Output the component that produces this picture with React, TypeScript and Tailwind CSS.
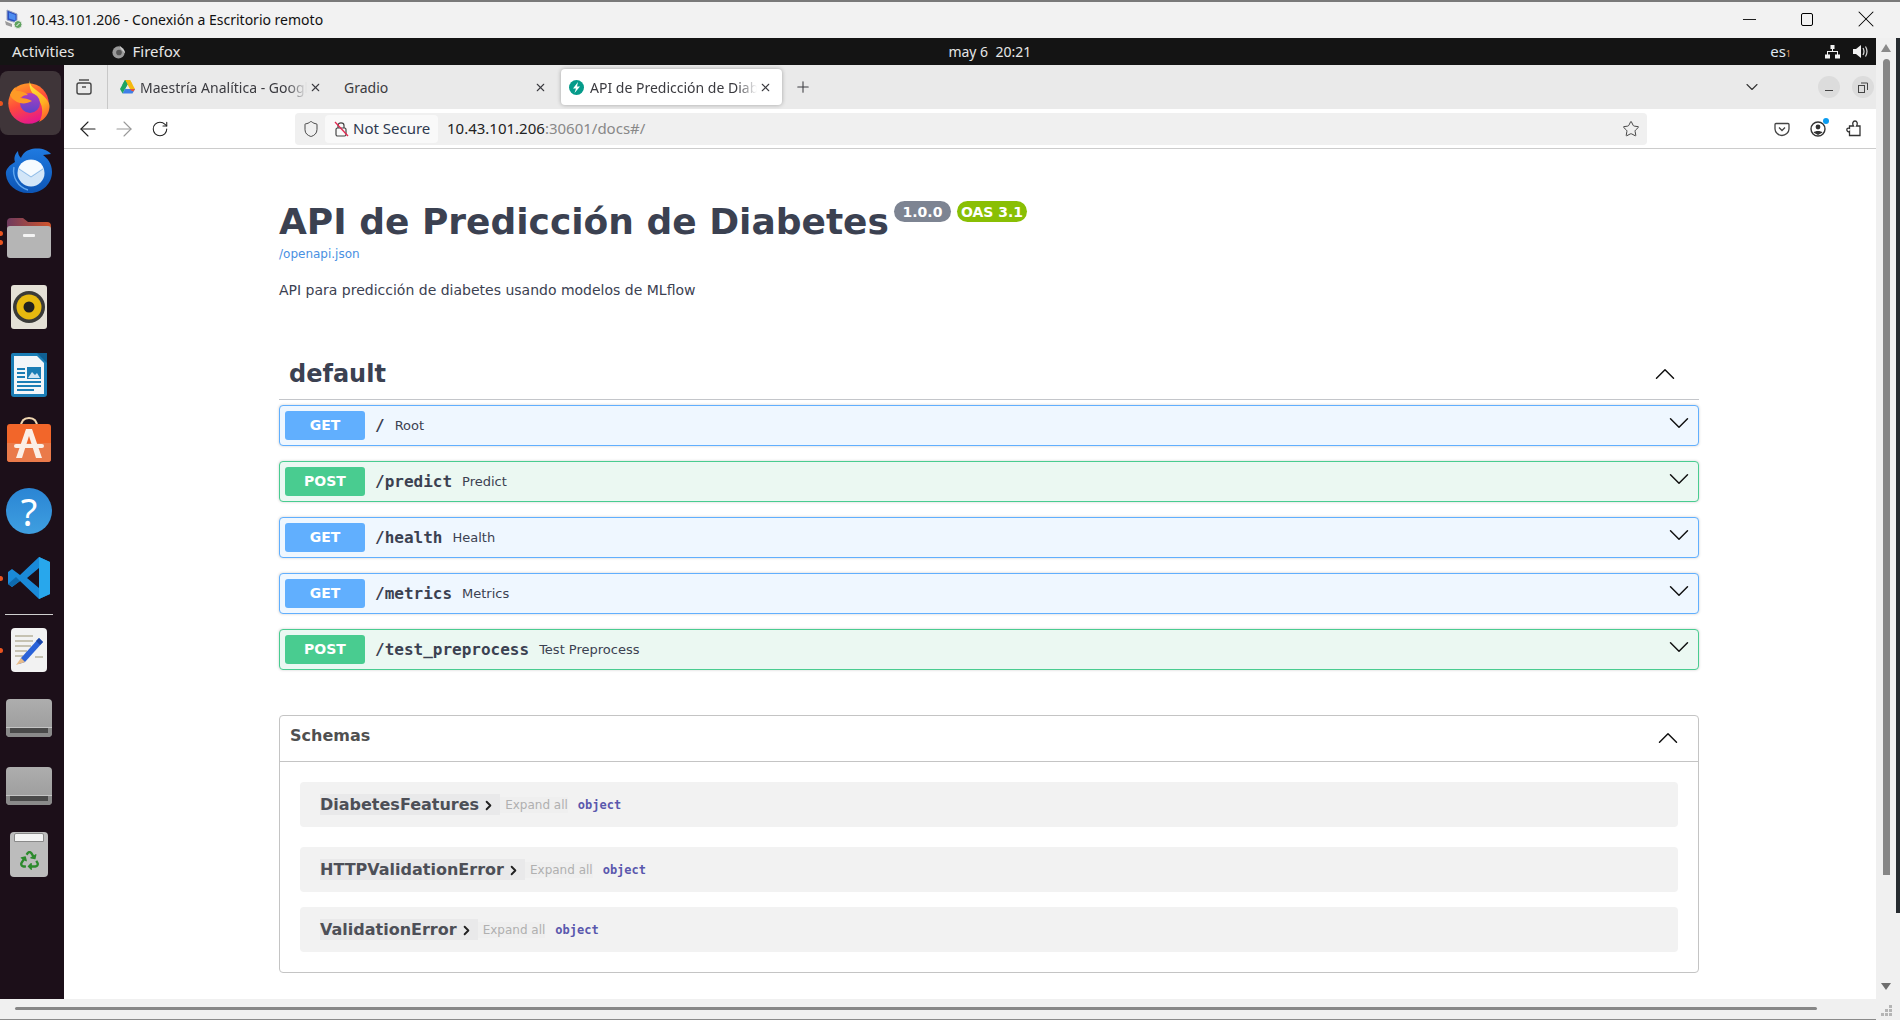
import React from 'react';
import { ArrowLeft, ArrowRight, ChevronDown, ChevronRight, ChevronUp, Minus, Plus, RotateCw, Shield, Star, X } from 'lucide-react';
import { FaRecycle } from 'react-icons/fa';

const uiFont = "font-['Noto_Sans',sans-serif]";
const swaggerFont = "font-['DejaVu_Sans',sans-serif]";
const monoFont = "font-['DejaVu_Sans_Mono',monospace]";

const RdpIcon = () => (
  <svg width="20" height="20" viewBox="0 0 20 20">
    <path d="M3 1 L13 5 V14 L3 11 Z" fill="#2b4fc0" stroke="#9aa5c0" strokeWidth="1" />
    <path d="M5 3.5 L11.5 6 V11.5 L5 9.5 Z" fill="#4d8df0" />
    <path d="M1 12 L8 15 V18 L2 16 Z" fill="#9a9a9a" />
    <circle cx="14" cy="15.5" r="4" fill="#5fa35f" stroke="#e8e8e8" />
    <path d="M12.5 17 L15.5 14" stroke="#fff" />
  </svg>
);

const FirefoxIcon = () => (
  <svg className="mb-[2px]" width="42" height="44" viewBox="0 0 42 44">
    <defs>
      <linearGradient id="ffBody" x1="0.2" y1="0" x2="0.6" y2="1">
        <stop offset="0" stopColor="#ffa024" />
        <stop offset="0.5" stopColor="#ff4a3c" />
        <stop offset="1" stopColor="#e31590" />
      </linearGradient>
      <linearGradient id="ffFlame" x1="0.3" y1="0" x2="0.7" y2="1">
        <stop offset="0" stopColor="#ffe23c" />
        <stop offset="0.6" stopColor="#ffb020" />
        <stop offset="1" stopColor="#ff5a30" />
      </linearGradient>
      <linearGradient id="ffCore" x1="0.5" y1="0" x2="0.5" y2="1">
        <stop offset="0" stopColor="#b13cc0" />
        <stop offset="1" stopColor="#5a45c8" />
      </linearGradient>
    </defs>
    <circle cx="20.5" cy="23.5" r="20.2" fill="url(#ffBody)" />
    <path d="M22 0 C21 6 26 8 32 13 C38 18 42 22 41.5 27 C41 34 37 39 31 42 C36 34 35 24 29 18 C24 14 20 7 22 0 Z" fill="url(#ffFlame)" />
    <circle cx="22" cy="23" r="10" fill="url(#ffCore)" />
    <path d="M2 15 C3 11 6 8 8 7 C7 10 8 11 10 11 C13 11 17 12 20 15 C16 15 14 16 12 18 C16 18 21 19 24 21 C19 24 13 24 9 22 C6 20 3 18 2 15 Z" fill="#ff9a26" />
  </svg>
);

const ThunderbirdIcon = () => (
  <svg className="mb-[2px]" width="48" height="48" viewBox="0 0 48 48">
    <defs>
      <linearGradient id="tbBody" x1="0.5" y1="0" x2="0.5" y2="1">
        <stop offset="0" stopColor="#1f7ae0" />
        <stop offset="1" stopColor="#0d55b5" />
      </linearGradient>
    </defs>
    <path d="M13 4 C9 8 9 12 10 15 C5 18 0 22 1 28 C2 38 12 47 25 46 C38 46 47 36 47 25 C47 16 42 11 38 8 L46 7 C42 2 32 0 24 3 C20 4 17 8 16 11 C14 9 13 7 13 4 Z" fill="url(#tbBody)" />
    <path d="M9 20 C7 30 13 40 23 43" stroke="#62a8f0" strokeWidth="1.4" fill="none" />
    <circle cx="26" cy="26" r="13.5" fill="#d3e6f8" />
    <path d="M14 21 L26 29 L38 21 C37 16 32 13 26 13 C20 13 15 16 14 21 Z" fill="#f6fbff" />
    <path d="M14 22 L26 30 L38 22" stroke="#8fbce8" strokeWidth="1" fill="none" />
  </svg>
);

const FilesIcon = () => (
  <svg width="46" height="42" viewBox="0 0 46 42">
    <defs>
      <linearGradient id="flTab" x1="0" y1="0" x2="1" y2="0">
        <stop offset="0" stopColor="#6e3a5e" />
        <stop offset="1" stopColor="#d2552c" />
      </linearGradient>
    </defs>
    <path d="M1 5 Q1 1 5 1 H17 L22 5 H41 Q45 5 45 9 V20 H1 Z" fill="url(#flTab)" />
    <rect x="1" y="9" width="44" height="32" rx="3" fill="#b5b5b5" />
    <rect x="17" y="17" width="12" height="3" rx="1" fill="#f4f4f4" />
  </svg>
);

const RhythmboxIcon = () => (
  <svg width="38" height="46" viewBox="0 0 38 46">
    <rect x="1" y="1" width="36" height="44" rx="3" fill="#e4e0d6" />
    <circle cx="19" cy="23" r="16" fill="#3a3a38" />
    <circle cx="19" cy="23" r="12.5" fill="#e7b90f" />
    <circle cx="19" cy="23" r="5.5" fill="#202020" />
  </svg>
);

const WriterIcon = () => (
  <svg width="38" height="46" viewBox="0 0 38 46">
    <path d="M3 1 H28 L37 10 V42 Q37 45 34 45 H4 Q1 45 1 42 V3 Q1 1 3 1 Z" fill="#1a7db5" />
    <path d="M4 4 H27 L34 11 V42 H4 Z" fill="#f2f6f9" />
    <path d="M27 1 L37 1 L37 11 Z" fill="#0f5f92" />
    <path d="M7 17 H15 M7 21 H15 M7 25 H15 M7 30 H31 M7 34 H31 M7 38 H24" stroke="#1a7db5" strokeWidth="2" />
    <rect x="17" y="15" width="14" height="12" fill="#1a7db5" />
    <path d="M18 26 L22 20 L25 23 L27 21 L30 26 Z" fill="#cfe4f2" />
  </svg>
);

const SoftwareIcon = () => (
  <svg width="46" height="46" viewBox="0 0 46 46">
    <path d="M15 10 C15 3 19 1 23 1 C27 1 31 3 31 10" fill="none" stroke="#f0d6b0" strokeWidth="2" />
    <path d="M4 7 H42 Q45 7 45 10 V42 Q45 45 42 45 H4 Q1 45 1 42 V10 Q1 7 4 7 Z" fill="#f2662a" />
    <path d="M1 26 H45 V42 Q45 45 42 45 H4 Q1 45 1 42 Z" fill="#ea7a4a" />
    <path d="M20 12 H26 L36 41 H30 L23 19 L16 41 H10 Z" fill="#fbeee6" />
    <rect x="8" y="27" width="30" height="4" rx="2" fill="#fbeee6" />
  </svg>
);

const HelpIcon = () => (
  <div className="w-[46px] h-[46px] rounded-full bg-gradient-to-b from-[#2a85d4] to-[#3f9fe0] flex items-center justify-center">
    <span className={`${uiFont} text-white text-[38px] leading-none`}>?</span>
  </div>
);

const VsCodeIcon = () => (
  <svg width="44" height="44" viewBox="0 0 44 44">
    <path d="M32 1 L43 6 V38 L32 43 L13 25 L5 31 L1 28 V16 L5 13 L13 19 Z M32 12 L20 22 L32 32 Z" fill="#1a8ad8" fillRule="evenodd" />
    <path d="M32 1 L43 6 V38 L32 43 Z M32 12 L32 32 Z" fill="#28a7ec" />
    <path d="M1 28 L5 31 L13 25 L9 21 Z" fill="#0e6bb0" />
  </svg>
);

const EditorIcon = () => (
  <svg width="38" height="46" viewBox="0 0 38 46">
    <rect x="1" y="1" width="36" height="44" rx="4" fill="#f2f2f2" />
    <path d="M5 9 H23 M5 14 H23 M5 19 H21 M5 24 H17 M5 29 H13 M25 30 H33" stroke="#c6c2b2" strokeWidth="2" />
    <path d="M29 11 L33 15 L15 35 L9 37 L11 31 Z" fill="#2a62d8" />
    <path d="M29 11 L33 15 L30 18 L26 14 Z" fill="#1b46a8" />
    <path d="M11 31 L15 35 L6 38 Z" fill="#e8bc8a" />
  </svg>
);

const DriveIcon = () => (
  <div className="w-[46px] h-[38px] rounded-[4px] bg-gradient-to-b from-[#adadad] to-[#9a9a9a] flex flex-col justify-end">
    <div className="h-[10px] rounded-b-[4px] bg-[#8a8a8a] px-[4px] pb-[3px] border-t border-[#c4c4c4]">
      <div className="h-[5px] bg-[#4a4a4a]" />
    </div>
  </div>
);

const TrashIcon = () => (
  <div className="w-[38px] h-[45px] rounded-[4px] bg-[#bcbcbc] flex flex-col items-center">
    <div className="w-[30px] h-[9px] mt-[1px] bg-[#f4f4f4] border border-[#8a8a8a] rounded-t-[2px]" />
    <FaRecycle className="mt-[9px] text-[#2d8a2d]" size={19} />
  </div>
);

const Dot = ({ className = '' }: { className?: string }) => (
  <span className={`absolute left-[-2px] w-[5px] h-[5px] rounded-full bg-[#e95420] ${className}`} />
);

const Dock = () => (
  <aside className="w-[64px] flex-none bg-[#1c0f19] pt-[6px] flex flex-col">
    <div className="relative h-[64px] w-[64px] pr-[3px]">
      <div className="w-full h-full rounded-[8px] bg-[#3f3539] pr-[3px] flex items-center justify-center">
        <FirefoxIcon />
      </div>
      <Dot className="top-[30px]" />
    </div>
    <div className="h-[74px] pr-[6px] flex items-center justify-center"><ThunderbirdIcon /></div>
    <div className="relative h-[58px] pr-[6px] flex items-center justify-center">
      <FilesIcon />
      <Dot className="top-[22px]" />
      <Dot className="top-[31px]" />
    </div>
    <div className="h-[80px] pr-[6px] flex items-center justify-center"><RhythmboxIcon /></div>
    <div className="h-[56px] pr-[6px] flex items-center justify-center"><WriterIcon /></div>
    <div className="h-[74px] pr-[6px] flex items-center justify-center"><SoftwareIcon /></div>
    <div className="h-[68px] pr-[6px] flex items-center justify-center"><HelpIcon /></div>
    <div className="relative h-[66px] pr-[6px] flex items-center justify-center">
      <VsCodeIcon />
      <Dot className="top-[31px]" />
    </div>
    <div className="ml-[5px] w-[48px] h-[6px] pt-[3px]"><div className="w-full h-px bg-[#cfcfcf]" /></div>
    <div className="relative h-[66px] pr-[6px] flex items-center justify-center">
      <EditorIcon />
      <Dot className="top-[31px]" />
    </div>
    <div className="h-[70px] pr-[6px] flex items-center justify-center"><DriveIcon /></div>
    <div className="h-[66px] pr-[6px] flex items-center justify-center"><DriveIcon /></div>
    <div className="h-[70px] pr-[6px] flex items-center justify-center"><TrashIcon /></div>
  </aside>
);

const TitleBar = () => (
  <header className={`h-[38px] flex-none bg-[#f2f2f2] border-t-2 border-[#7a7a7a] pb-[2px] flex items-center ${uiFont} text-[14px] text-[#111]`}>
    <div className="ml-[4px] w-[22px] flex-none"><RdpIcon /></div>
    <span className="ml-[3px]">10.43.101.206 - Conexión a Escritorio remoto</span>
    <Minus size={21} strokeWidth={1} className="ml-auto text-black" />
    <div className="ml-[41px] w-[12px] h-[13px] border border-black rounded-[2px]" />
    <X size={28} strokeWidth={0.9} className="ml-[39px] mr-[20px] text-black" />
  </header>
);

const TopBar = () => (
  <div className={`h-[27px] flex-none bg-[#141414] flex items-center ${uiFont} text-[15px] text-[#e6e6e6]`}>
    <span className="ml-[12px]">Activities</span>
    <svg className="ml-[36px]" width="15" height="15" viewBox="0 0 16 16">
      <circle cx="8" cy="9" r="6.5" fill="#9a9a9a" />
      <path d="M9 1 C10 4 15 5 15 10 C13 7 10 6 9 1 Z" fill="#d0d0d0" />
      <circle cx="8.5" cy="9" r="3" fill="#555" />
    </svg>
    <span className="ml-[7px]">Firefox</span>
    <span className="ml-[768px] text-[14px] whitespace-pre">may 6  20:21</span>
    <span className="ml-[739px] text-[15px] text-[#dfe8f2]">es<span className="text-[9px] text-[#e8a060]">1</span></span>
    <svg className="ml-[34px]" width="15" height="14" viewBox="0 0 15 14">
      <path d="M5.5 0 H9.5 V4 H8 V6 H13 V9.5 H15 V13.5 H10 V9.5 H12 V7 H3 V9.5 H5 V13.5 H0 V9.5 H2 V6 H7 V4 H5.5 Z" fill="#f2f2f2" />
    </svg>
    <svg className="ml-[13px]" width="16" height="15" viewBox="0 0 16 15">
      <path d="M0 5 H3 L8 1 V14 L3 10 H0 Z" fill="#f2f2f2" />
      <path d="M10 4 Q12 7.5 10 11 M12.5 2.5 Q15.5 7.5 12.5 12.5" stroke="#dcdcdc" strokeWidth="1.2" fill="none" />
    </svg>
  </div>
);

const DriveFavicon = () => (
  <svg width="15" height="14" viewBox="0 0 15 14">
    <path d="M5 0 H10 L5 9 L2.5 4.5 Z" fill="#1fa463" />
    <path d="M5 0 H10 L12.5 4.5 H7.5 Z" fill="#f5b90f" />
    <path d="M10 0 L15 9 H10 L7.5 4.5 Z" fill="#f5b90f" />
    <path d="M5 9 H15 L12.5 13.5 H2.5 Z" fill="#3f7fe8" />
    <path d="M0 9 L5 0 L7.5 4.5 L2.5 13.5 Z" fill="#1fa463" />
    <path d="M10 9 H15 L13.5 11.5 L11 10.5 Z" fill="#e8503a" />
  </svg>
);

const FastApiFavicon = () => (
  <svg width="15" height="15" viewBox="0 0 15 15">
    <circle cx="7.5" cy="7.5" r="7.5" fill="#059b8a" />
    <path d="M9 2 L4 8.5 H7 L5.5 13 L11 6.5 H8 Z" fill="#fff" />
  </svg>
);

const Tabs = () => (
  <div className={`h-[44px] flex-none bg-[#eaeaea] flex items-center ${uiFont} text-[14px] text-[#3b3b40]`}>
    <div className="w-[44px] h-full flex-none border-r border-[#c8c8c8] pr-[4px] flex items-center justify-center">
      <svg width="18" height="18" viewBox="0 0 18 18" fill="none" stroke="#444" strokeWidth="1.4">
        <path d="M4 2 H14" />
        <rect x="2" y="5" width="14" height="11" rx="2" />
        <path d="M7 9 H11" />
      </svg>
    </div>
    <div className="w-[225px] h-[36px] flex-none pl-[12px] pr-[11px] flex items-center">
      <DriveFavicon />
      <span className="ml-[5px] flex-1 whitespace-nowrap overflow-hidden [mask-image:linear-gradient(to_right,black_88%,transparent)]">Maestría Analítica - Google Drive</span>
      <X size={13} className="ml-[2px] flex-none" />
    </div>
    <div className="w-[228px] h-[36px] flex-none pl-[11px] pr-[14px] flex items-center">
      <span className="flex-1">Gradio</span>
      <X size={13} className="flex-none" />
    </div>
    <div className="w-[221px] h-[36px] flex-none pl-[8px] pr-[10px] flex items-center bg-white rounded-[4px] shadow-[0_0_4px_rgba(0,0,0,0.3)]">
      <FastApiFavicon />
      <span className="ml-[6px] flex-1 whitespace-nowrap overflow-hidden [mask-image:linear-gradient(to_right,black_88%,transparent)]">API de Predicción de Diabetes</span>
      <X size={13} className="ml-[2px] flex-none" />
    </div>
    <Plus size={18} strokeWidth={1.4} className="ml-[12px]" />
    <ChevronDown size={20} strokeWidth={1.3} className="ml-auto text-[#333]" />
    <div className="ml-[56px] w-[22px] h-[22px] rounded-full bg-[#dcdcdc] flex items-center justify-center">
      <div className="w-[8px] h-px bg-[#444] mt-[6px]" />
    </div>
    <div className="ml-[12px] mr-[2px] w-[22px] h-[22px] rounded-full bg-[#dcdcdc] flex items-center justify-center">
      <svg width="10" height="11" viewBox="0 0 10 11" fill="none" stroke="#444">
        <rect x="0.5" y="3.5" width="6" height="7" />
        <path d="M3 1 H9.5 V8" />
      </svg>
    </div>
  </div>
);

const Toolbar = () => (
  <div className={`h-[40px] flex-none bg-white border-b border-[#cccccc] flex items-center ${uiFont} text-[#222]`}>
    <ArrowLeft size={24} strokeWidth={1.1} className="ml-[12px] text-[#222]" />
    <ArrowRight size={24} strokeWidth={1.1} className="ml-[12px] text-[#999]" />
    <RotateCw size={18} strokeWidth={1.4} className="ml-[15px] text-[#222]" />
    <div className="ml-[126px] w-[1352px] h-[32px] rounded-[4px] bg-[#f0f0f0] flex items-center">
      <Shield size={18} strokeWidth={1.3} className="ml-[7px] text-[#444]" />
      <div className="ml-[5px] w-[113px] h-[28px] rounded-[4px] bg-[#f9f9f9] flex items-center pl-[9px] text-[15px] text-[#2f3a50]">
        <svg className="flex-none" width="15" height="16" viewBox="0 0 15 16" fill="none">
          <rect x="2" y="7" width="10" height="8" rx="1.5" stroke="#444" strokeWidth="1.2" />
          <path d="M4 7 V4.5 C4 1 10 1 10 4.5 V7" stroke="#444" strokeWidth="1.2" />
          <path d="M1 1 L14 15" stroke="#e22850" strokeWidth="1.3" />
        </svg>
        <span className="ml-[4px] whitespace-nowrap">Not Secure</span>
      </div>
      <span className="ml-[9px] text-[15px] text-[#222]">10.43.101.206<span className="text-[#888]">:30601/docs#/</span></span>
      <Star size={18} strokeWidth={1.2} className="ml-auto mr-[7px] text-[#333]" />
    </div>
    <svg className="ml-[127px]" width="16" height="16" viewBox="0 0 16 16" fill="none" stroke="#444" strokeWidth="1.3">
      <path d="M2 2.5 H14 Q15 2.5 15 3.5 V8 C15 11.5 11.5 14.5 8 14.5 C4.5 14.5 1 11.5 1 8 V3.5 Q1 2.5 2 2.5 Z" />
      <path d="M5 6.5 L8 9.5 L11 6.5" />
    </svg>
    <div className="relative ml-[20px] w-[16px] h-[16px]">
      <svg width="16" height="16" viewBox="0 0 16 16" fill="none">
        <circle cx="8" cy="8" r="7" stroke="#333" strokeWidth="1.4" />
        <circle cx="8" cy="6" r="2.4" fill="#333" />
        <path d="M3.5 11.5 C5 9.5 11 9.5 12.5 11.5 L8 14 Z" fill="#333" />
      </svg>
      <span className="absolute top-[-3px] right-[-3px] w-[6px] h-[6px] rounded-full bg-[#0a9cf0]" />
    </div>
    <svg className="ml-[20px]" width="16" height="17" viewBox="0 0 16 17" fill="none" stroke="#333" strokeWidth="1.3">
      <path d="M3.5 15.5 H14 V6 H10.5 C12 3.5 11 1 9 1 C7 1 6 3.5 7.5 6 H3.5 V8.5 C1.5 7.5 0.5 9 1 10.5 C1.5 12 3 12 3.5 11.5 Z" />
    </svg>
  </div>
);

const opStyles = {
  GET: { box: 'bg-[#eff7ff] border-[#61affe]', badge: 'bg-[#61affe]' },
  POST: { box: 'bg-[#ebf8f2] border-[#49cc90]', badge: 'bg-[#49cc90]' },
};

const OpRow = ({ method, path, summary }: { method: 'GET' | 'POST'; path: string; summary: string }) => (
  <div className={`h-[41px] mb-[15px] pl-[5px] pr-[2px] flex items-center rounded-[4px] border ${opStyles[method].box} shadow-[0_0_3px_rgba(0,0,0,0.19)]`}>
    <span className={`w-[80px] h-[29px] flex-none rounded-[3px] ${opStyles[method].badge} flex items-center justify-center text-white font-bold text-[14px]`}>{method}</span>
    <span className={`ml-[10px] ${monoFont} font-bold text-[16px] text-[#3b4151]`}>{path}</span>
    <span className="ml-[10px] text-[13px] text-[#3b4151]">{summary}</span>
    <ChevronDown size={34} strokeWidth={1.05} className="ml-auto mb-[5px] text-[#111]" />
  </div>
);

const ModelRow = ({ name, className }: { name: string; className: string }) => (
  <div className={`h-[45px] rounded-[4px] bg-[#f2f2f2] pl-[20px] flex items-center ${className}`}>
    <span className="h-[21px] bg-[#e9e9ea] flex items-center text-[16px] font-bold text-[#4d4f57] pr-[4px]">
      {name}
      <ChevronRight size={15} strokeWidth={3} className="ml-[2px] mt-[1px] text-[#222]" />
    </span>
    <span className="h-[16px] mt-[1px] bg-[#efefef] pl-[5px] flex items-center text-[12px] text-[#b0b0b0]">Expand all</span>
    <span className={`ml-[10px] mt-[1px] ${monoFont} font-bold text-[12px] text-[#5a58ad]`}>object</span>
  </div>
);

const Docs = () => (
  <main className={`flex-1 bg-white overflow-hidden pl-[215px] ${swaggerFont} text-[#3b4151]`}>
    <div className="w-[1420px]">
      <div className="mt-[51px] flex items-start">
        <h2 className="text-[36px] leading-[44px] font-bold">API de Predicción de Diabetes</h2>
        <span className="ml-[5px] mt-[1px] h-[21px] w-[57px] pt-px rounded-full bg-[#7d8492] flex items-center justify-center text-white font-bold text-[14px]">1.0.0</span>
        <span className="ml-[6px] mt-[1px] h-[21px] w-[70px] pt-px rounded-full bg-[#89bf04] flex items-center justify-center text-white font-bold text-[14px]">OAS 3.1</span>
      </div>
      <div className="mt-[2px] h-[17px] leading-[17px] text-[12px] text-[#4990e2]">/openapi.json</div>
      <p className="mt-[19px] h-[17px] leading-[17px] text-[14px]">API para predicción de diabetes usando modelos de MLflow</p>
      <div className="mt-[47px] h-[54px] border-b border-[#c4c6ca] pt-[2px] pl-[10px] pr-[17px] flex items-center">
        <h3 className="text-[24px] font-bold">default</h3>
        <ChevronUp size={34} strokeWidth={1.05} className="ml-auto text-[#111]" />
      </div>
      <div className="mt-[5px]">
        <OpRow method="GET" path="/" summary="Root" />
        <OpRow method="POST" path="/predict" summary="Predict" />
        <OpRow method="GET" path="/health" summary="Health" />
        <OpRow method="GET" path="/metrics" summary="Metrics" />
        <OpRow method="POST" path="/test_preprocess" summary="Test Preprocess" />
      </div>
      <section className="mt-[45px] h-[258px] rounded-[4px] border border-[#c4c4c4]">
        <div className="h-[46px] border-b border-[#c4c4c4] pl-[10px] pr-[13px] flex items-center justify-between">
          <span className="mb-[5px] text-[16px] font-bold text-[#505050]">Schemas</span>
          <ChevronUp size={34} strokeWidth={1.05} className="mb-[2px] text-[#111]" />
        </div>
        <div className="px-[20px] pt-[20px]">
          <ModelRow name="DiabetesFeatures" className="mb-[20px]" />
          <ModelRow name="HTTPValidationError" className="mb-[15px]" />
          <ModelRow name="ValidationError" className="" />
        </div>
      </section>
    </div>
  </main>
);

const HScroll = () => (
  <div className="h-[21px] flex-none bg-[#f0f0f0] border-b border-[#8a8a8a] pl-[15px] pt-[8px]">
    <div className="w-[1802px] h-[3px] bg-[#868686] rounded-full" />
  </div>
);

const VScroll = () => (
  <div className="w-[24px] flex-none flex bg-[#f0f0f0]">
    <div className="w-[20px] flex flex-col items-center">
      <div className="mt-[6px] w-0 h-0 border-x-[5px] border-x-transparent border-b-[8px] border-b-[#8a8a8a]" />
      <div className="mt-[7px] w-[7px] h-[816px] rounded-t-full bg-[#868686]" />
      <div className="mt-[108px] w-0 h-0 border-x-[5px] border-x-transparent border-t-[7px] border-t-[#6e6e6e]" />
      <svg className="mt-[15px] ml-[2px]" width="12" height="12" viewBox="0 0 12 12" fill="#b5b5b5">
        <rect x="8" y="0" width="3" height="3" />
        <rect x="4" y="4" width="3" height="3" />
        <rect x="8" y="4" width="3" height="3" />
        <rect x="0" y="8" width="3" height="3" />
        <rect x="4" y="8" width="3" height="3" />
        <rect x="8" y="8" width="3" height="3" />
      </svg>
    </div>
    <div className="w-[4px] h-[875px] bg-[#262b2f]" />
  </div>
);

export default function App() {
  return (
    <div className="w-[1900px] h-[1020px] overflow-hidden flex flex-col bg-white">
      <TitleBar />
      <div className="flex-1 flex min-h-0">
        <div className="w-[1876px] flex-none flex flex-col min-h-0">
          <TopBar />
          <div className="flex-1 flex min-h-0">
            <Dock />
            <div className="flex-1 flex flex-col min-w-0">
              <Tabs />
              <Toolbar />
              <Docs />
            </div>
          </div>
          <HScroll />
        </div>
        <VScroll />
      </div>
    </div>
  );
}
